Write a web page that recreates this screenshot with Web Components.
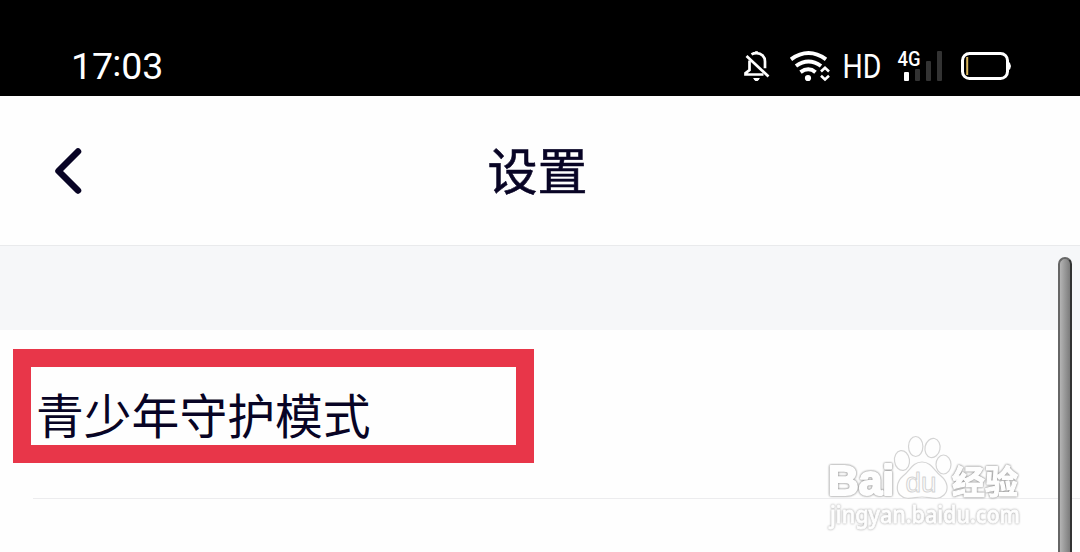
<!DOCTYPE html>
<html lang="zh-CN">
<head>
<meta charset="utf-8">
<title>设置</title>
<style>
    body {
        margin: 0;
        overflow: hidden;
        background: #fefefe;
        font-family: "Noto Sans CJK SC", sans-serif;
        color: #080425;
    }
</style>
</head>
<body>
<settings-screen></settings-screen>
<script>
class StatusBar extends HTMLElement {

    constructor() {
        super();

        this.attachShadow({ mode: 'open' });
        this.shadowRoot.innerHTML = `
            <style>
                :host {
                    display: flex;
                    align-items: flex-start;
                    justify-content: space-between;
                    box-sizing: border-box;
                    height: 96px;
                    padding: 40px 60px 0 71px;
                    background: #000;
                }
                .time {
                    display: flex;
                    color: #fff;
                    font-family: Roboto, sans-serif;
                    font-size: 37.500px;
                    line-height: 53px;
                }
                .time span {
                    margin: -3px 0 3px -1px;
                }
                svg {
                    display: block;
                    overflow: visible;
                    fill: none;
                    stroke: #fff;
                }
                text {
                    fill: #fff;
                    stroke: none;
                }
            </style>
            <div class="time">17<span>:</span>03</div>
            <svg width="290" height="52" viewBox="730 40 290 52">
                <g stroke-width="2.7">
                    <path d="M751.5 54.3q2-1.2 5-1.2c5 0 8.500 3.500 8.500 8.300v6.800M749.500 60.500v9.500l-4 3.200v1.300h18" />
                    <path d="M746.500 56l22 20.500" />
                    <path d="M756.500 51.200v2" />
                    <path d="M753.700 78.500h5.600l-1.500 2h-2.600z" stroke-width="1" fill="#fff" />
                </g>
                <g stroke-width="4">
                    <path d="M791 59.300q17.500-12.500 35 0" />
                    <path d="M796 66q12.500-9 25 0" />
                    <path d="M800.500 72.200q8-5.800 15 0" />
                    <circle cx="808" cy="78" r="3.100" fill="#fff" stroke="none" />
                    <path d="M821 71.500l4-3.700 4 3.700M821 75.700l4 3.700 4-3.700" stroke-width="2.600" />
                </g>
                <text x="842.500" y="78" font-family="Roboto" font-size="33.500" textLength="39" lengthAdjust="spacingAndGlyphs">HD</text>
                <text x="897.500" y="66" font-family="Roboto" font-size="20" font-weight="500" textLength="23" lengthAdjust="spacingAndGlyphs">4G</text>
                <g stroke="none" fill="#333">
                    <rect x="904" y="72" width="5" height="9" rx="1" fill="#fff" />
                    <rect x="915" y="69" width="5" height="12" rx="1" />
                    <rect x="926" y="61" width="5" height="20" rx="1" />
                    <rect x="937" y="51" width="5" height="30" rx="1" />
                </g>
                <rect x="962.500" y="53.500" width="45" height="25" rx="7" stroke-width="3" />
                <path d="M1008 61q3 2 3 5t-3 5z" fill="#fff" stroke="none" />
                <path d="M967.200 57v18" stroke="#d9b55c" stroke-width="2" />
            </svg>
        `;
    }
}

class NavHeader extends HTMLElement {

    constructor() {
        super();

        this.attachShadow({ mode: 'open' });
        this.shadowRoot.innerHTML = `
            <style>
                :host {
                    display: grid;
                    grid-template-columns: 120px 1fr 120px;
                    align-items: center;
                    box-sizing: border-box;
                    height: 150px;
                    border-bottom: 1px solid #e9eaec;
                    background: #fefefe;
                }
                svg {
                    display: block;
                    margin-left: 48px;
                    fill: none;
                    stroke: #080425;
                    stroke-width: 6.500;
                    stroke-linecap: round;
                    stroke-linejoin: round;
                }
                h1 {
                    margin: 0 5px 5px 0;
                    font-size: 50px;
                    line-height: 74px;
                    font-weight: 400;
                    text-align: center;
                    -webkit-text-stroke: 0.6px #080425;
                }
            </style>
            <svg width="40" height="54" viewBox="0 0 40 54">
                <path d="M30 7.500L10.500 27 30 46.500" />
            </svg>
            <h1><slot></slot></h1>
        `;
    }
}

class SettingsRow extends HTMLElement {

    constructor() {
        super();

        this.attachShadow({ mode: 'open' });
        this.shadowRoot.innerHTML = `
            <style>
                :host {
                    display: flex;
                    box-sizing: border-box;
                    height: 169px;
                    padding-left: 33px;
                }
                .label {
                    flex: 1;
                    border-bottom: 1px solid #ececee;
                    padding-left: 3px;
                    font-size: 47.800px;
                    line-height: 168px;
                    white-space: nowrap;
                }
            </style>
            <div class="label"><slot></slot></div>
        `;
    }
}

// Red frame that lies over the row it points out
class HighlightFrame extends HTMLElement {

    constructor() {
        super();

        this.attachShadow({ mode: 'open' });
        this.shadowRoot.innerHTML = `
            <style>
                :host {
                    position: absolute;
                    left: 13px;
                    top: 349px;
                    box-sizing: border-box;
                    width: 521px;
                    height: 114px;
                    border: 18px solid #e83649;
                }
            </style>
        `;
    }
}

class ScrollThumb extends HTMLElement {

    constructor() {
        super();

        this.attachShadow({ mode: 'open' });
        this.shadowRoot.innerHTML = `
            <style>
                :host {
                    position: absolute;
                    left: 1058px;
                    top: 257px;
                    box-sizing: border-box;
                    width: 14px;
                    height: 310px;
                    border: 2px solid #666;
                    border-right-color: #333;
                    border-radius: 7px;
                    background: linear-gradient(90deg, #b4b4b4, #7c7c7c);
                }
            </style>
        `;
    }
}

class WaterMark extends HTMLElement {

    constructor() {
        super();

        this.attachShadow({ mode: 'open' });
        this.shadowRoot.innerHTML = `
            <style>
                :host {
                    position: absolute;
                    left: 815px;
                    top: 425px;
                }
                svg {
                    display: block;
                    overflow: visible;
                    fill: #fefefe;
                    stroke: #d4d4d4;
                    stroke-width: 1.200;
                    stroke-linejoin: round;
                }
                /* fat white letters with a thin grey rim */
                .rim {
                    stroke: #fefefe;
                    stroke-width: 1.200;
                    filter: drop-shadow(0 0 0.8px #888) drop-shadow(0 0 0.5px #ccc);
                }
                .bai {
                    stroke-width: 2.200;
                }
                .url {
                    stroke-width: 0.800;
                    filter: drop-shadow(0 0 1px #999);
                }
            </style>
            <svg width="220" height="115" viewBox="0 0 220 115">
                <text class="rim bai" x="13" y="70" font-family="Liberation Sans" font-weight="700" font-size="42" textLength="66" lengthAdjust="spacingAndGlyphs">Bai</text>
                <ellipse cx="87" cy="35.500" rx="7.500" ry="10" transform="rotate(-8 87 35.500)" />
                <ellipse cx="100.700" cy="21.500" rx="7.200" ry="10" />
                <ellipse cx="117.500" cy="23" rx="7.500" ry="9.700" transform="rotate(12 117.500 23)" />
                <ellipse cx="128.500" cy="39.500" rx="7.500" ry="9.500" />
                <path d="M107 37c-10 0-12 9-19 14-7 6-7 15-3 19 6 6 14 2 22 2s16 4 22-2c5-5 4-13-3-19-7-5-9-14-19-14z" />
                <text x="90.500" y="66.500" font-family="Liberation Sans" font-size="27" stroke-width="1" textLength="31" lengthAdjust="spacingAndGlyphs">du</text>
                <text class="rim" x="137" y="69" font-family="Noto Sans CJK SC" font-weight="700" font-size="33" textLength="66">经验</text>
                <text class="rim url" x="15" y="98" font-family="Noto Sans" font-size="23" font-weight="500" textLength="190" lengthAdjust="spacingAndGlyphs">jingyan.baidu.com</text>
            </svg>
        `;
    }
}

class SettingsScreen extends HTMLElement {

    constructor() {
        super();

        this.attachShadow({ mode: 'open' });
        this.shadowRoot.innerHTML = `
            <style>
                :host {
                    display: flex;
                    flex-direction: column;
                    position: relative;
                    height: 552px;
                    overflow: hidden;
                }
                .gap {
                    height: 84px;
                    background: #f6f7f9;
                }
            </style>
            <status-bar></status-bar>
            <nav-header>设置</nav-header>
            <div class="gap"></div>
            <settings-row>青少年守护模式</settings-row>
            <highlight-frame></highlight-frame>
            <water-mark></water-mark>
            <scroll-thumb></scroll-thumb>
        `;
    }
}

window.customElements.define('status-bar', StatusBar);
window.customElements.define('nav-header', NavHeader);
window.customElements.define('settings-row', SettingsRow);
window.customElements.define('highlight-frame', HighlightFrame);
window.customElements.define('scroll-thumb', ScrollThumb);
window.customElements.define('water-mark', WaterMark);
window.customElements.define('settings-screen', SettingsScreen);
</script>
</body>
</html>
